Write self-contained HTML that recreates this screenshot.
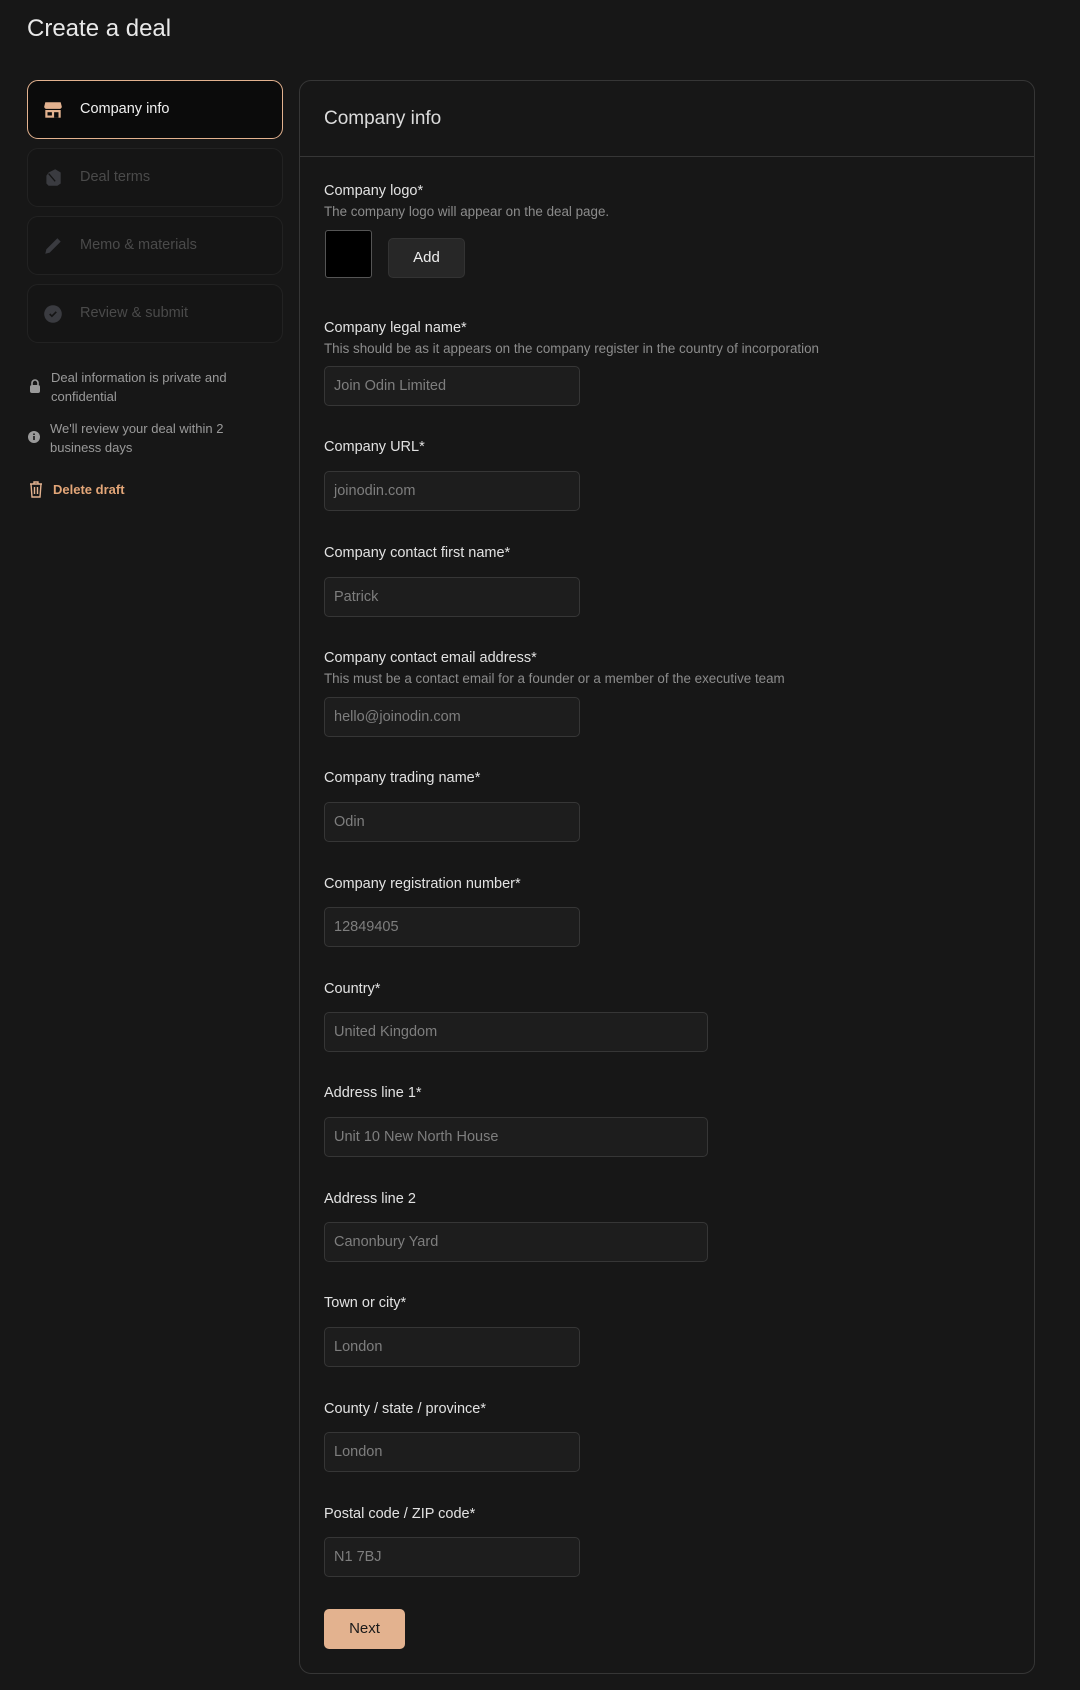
<!DOCTYPE html>
<html><head><meta charset="utf-8"><style>
*{box-sizing:border-box;margin:0;padding:0}
body{width:1080px;height:1690px;background:#171717;font-family:"Liberation Sans",sans-serif;position:relative;overflow:hidden;color:#e6e6e6}
.a{position:absolute}
.title{left:27px;top:15px;font-size:24px;color:#e8e8e8}
.nav{left:27px;width:256px;height:59px;border:1px solid #222;border-radius:11px;background:#151515}
.nav.on{border-color:#e3b28f;background:#0b0b0b}
.nav span{position:absolute;left:52px;top:20px;font-size:14.5px;color:#4a4a4a}
.nav.on span{color:#f0f0f0}
.nav svg{position:absolute;left:14px;top:18px}
.note{left:51px;font-size:13px;color:#9a9a9a;line-height:19px;width:210px}
.card{left:299px;top:80px;width:736px;height:1594px;border:1px solid #363636;border-radius:12px}
.lbl{left:324px;font-size:14.5px;color:#e2e2e2}
.desc{left:324px;font-size:13.4px;color:#8c8c8c}
.in{left:324px;width:256px;height:40px;border:1px solid #363636;border-radius:5px;background:#1d1d1d;font-size:14.5px;color:#7e7e7e;padding:11px 0 0 9px}
.w{width:384px}
</style></head><body>
<div class="a title">Create a deal</div>

<div class="a nav on" style="top:80px"><svg width="22" height="22" viewBox="0 0 20 20"><path d="M3 3h14l1 4c0 1-1 2-2 2H4C3 9 2 8 2 7z" fill="#e3b28f"/><rect x="3" y="10" width="14" height="7" fill="#e3b28f"/><rect x="5" y="12" width="4" height="3" fill="#0b0b0b"/><rect x="11" y="12" width="4" height="5" fill="#0b0b0b"/></svg><span>Company info</span></div>
<div class="a nav" style="top:148px"><svg width="22" height="22" viewBox="0 0 20 20"><path d="M6 5l6-3 5 3v10l-3 2H6l-2-2V8z" fill="#3a3b40"/><path d="M6 6l6 7" stroke="#151515" stroke-width="1.2"/></svg><span>Deal terms</span></div>
<div class="a nav" style="top:216px"><svg width="22" height="22" viewBox="0 0 20 20"><path d="M3 17l1-4L14 3l3 3L7 16z" fill="#3a3b40"/></svg><span>Memo &amp; materials</span></div>
<div class="a nav" style="top:284px"><svg width="22" height="22" viewBox="0 0 20 20"><circle cx="10" cy="10" r="8" fill="#3a3b40"/><path d="M7 10l2 2 4-4" stroke="#151515" stroke-width="1.5" fill="none"/></svg><span>Review &amp; submit</span></div>

<svg class="a" style="left:28px;top:378px" width="14" height="16" viewBox="0 0 14 16"><path d="M4 7V5a3 3 0 016 0v2" stroke="#9a9a9a" stroke-width="1.6" fill="none"/><rect x="2" y="7" width="10" height="8" rx="2" fill="#9a9a9a"/></svg>
<div class="a note" style="top:368px">Deal information is private and confidential</div>
<svg class="a" style="left:27px;top:430px" width="14" height="14"><circle cx="7" cy="7" r="6" fill="#9a9a9a"/><rect x="6.2" y="6" width="1.6" height="4" fill="#171717"/><rect x="6.2" y="3.5" width="1.6" height="1.5" fill="#171717"/></svg>
<div class="a note" style="top:419px;left:50px">We'll review your deal within 2 business days</div>
<svg class="a" style="left:28px;top:480px" width="16" height="18" viewBox="0 0 16 18"><path d="M2 4h12M6 4V2h4v2M3 4l1 13h8l1-13M6.5 7v7M9.5 7v7" stroke="#e3b28f" stroke-width="1.4" fill="none"/></svg>
<div class="a" style="left:53px;top:482px;font-size:13px;font-weight:bold;color:#e3a678">Delete draft</div>

<div class="a card"></div>
<div class="a" style="left:324px;top:108px;font-size:19px;color:#dcdcdc">Company info</div>
<div class="a" style="left:300px;top:156px;width:734px;height:1px;background:#363636"></div>

<div class="a lbl" style="top:183px">Company logo*</div>
<div class="a desc" style="top:204px">The company logo will appear on the deal page.</div>
<div class="a" style="left:325px;top:230px;width:47px;height:48px;background:#000;border:1px solid #555;border-radius:3px"></div>
<div class="a" style="left:388px;top:238px;width:77px;height:40px;background:#272727;border:1px solid #333;border-radius:5px;font-size:15px;color:#eee;text-align:center;line-height:38px">Add</div>

<div class="a lbl" style="top:320px">Company legal name*</div>
<div class="a desc" style="top:341px">This should be as it appears on the company register in the country of incorporation</div>
<div class="a in" style="top:366px">Join Odin Limited</div>

<div class="a lbl" style="top:439px">Company URL*</div>
<div class="a in" style="top:471px">joinodin.com</div>

<div class="a lbl" style="top:545px">Company contact first name*</div>
<div class="a in" style="top:577px">Patrick</div>

<div class="a lbl" style="top:650px">Company contact email address*</div>
<div class="a desc" style="top:671px">This must be a contact email for a founder or a member of the executive team</div>
<div class="a in" style="top:697px">hello@joinodin.com</div>

<div class="a lbl" style="top:770px">Company trading name*</div>
<div class="a in" style="top:802px">Odin</div>

<div class="a lbl" style="top:876px">Company registration number*</div>
<div class="a in" style="top:907px">12849405</div>

<div class="a lbl" style="top:981px">Country*</div>
<div class="a in w" style="top:1012px">United Kingdom</div>

<div class="a lbl" style="top:1085px">Address line 1*</div>
<div class="a in w" style="top:1117px">Unit 10 New North House</div>

<div class="a lbl" style="top:1191px">Address line 2</div>
<div class="a in w" style="top:1222px">Canonbury Yard</div>

<div class="a lbl" style="top:1295px">Town or city*</div>
<div class="a in" style="top:1327px">London</div>

<div class="a lbl" style="top:1401px">County / state / province*</div>
<div class="a in" style="top:1432px">London</div>

<div class="a lbl" style="top:1506px">Postal code / ZIP code*</div>
<div class="a in" style="top:1537px">N1 7BJ</div>

<div class="a" style="left:324px;top:1609px;width:81px;height:40px;background:#e3b28f;border-radius:5px;font-size:15px;color:#1a1a1a;text-align:center;line-height:40px">Next</div>
</body></html>
